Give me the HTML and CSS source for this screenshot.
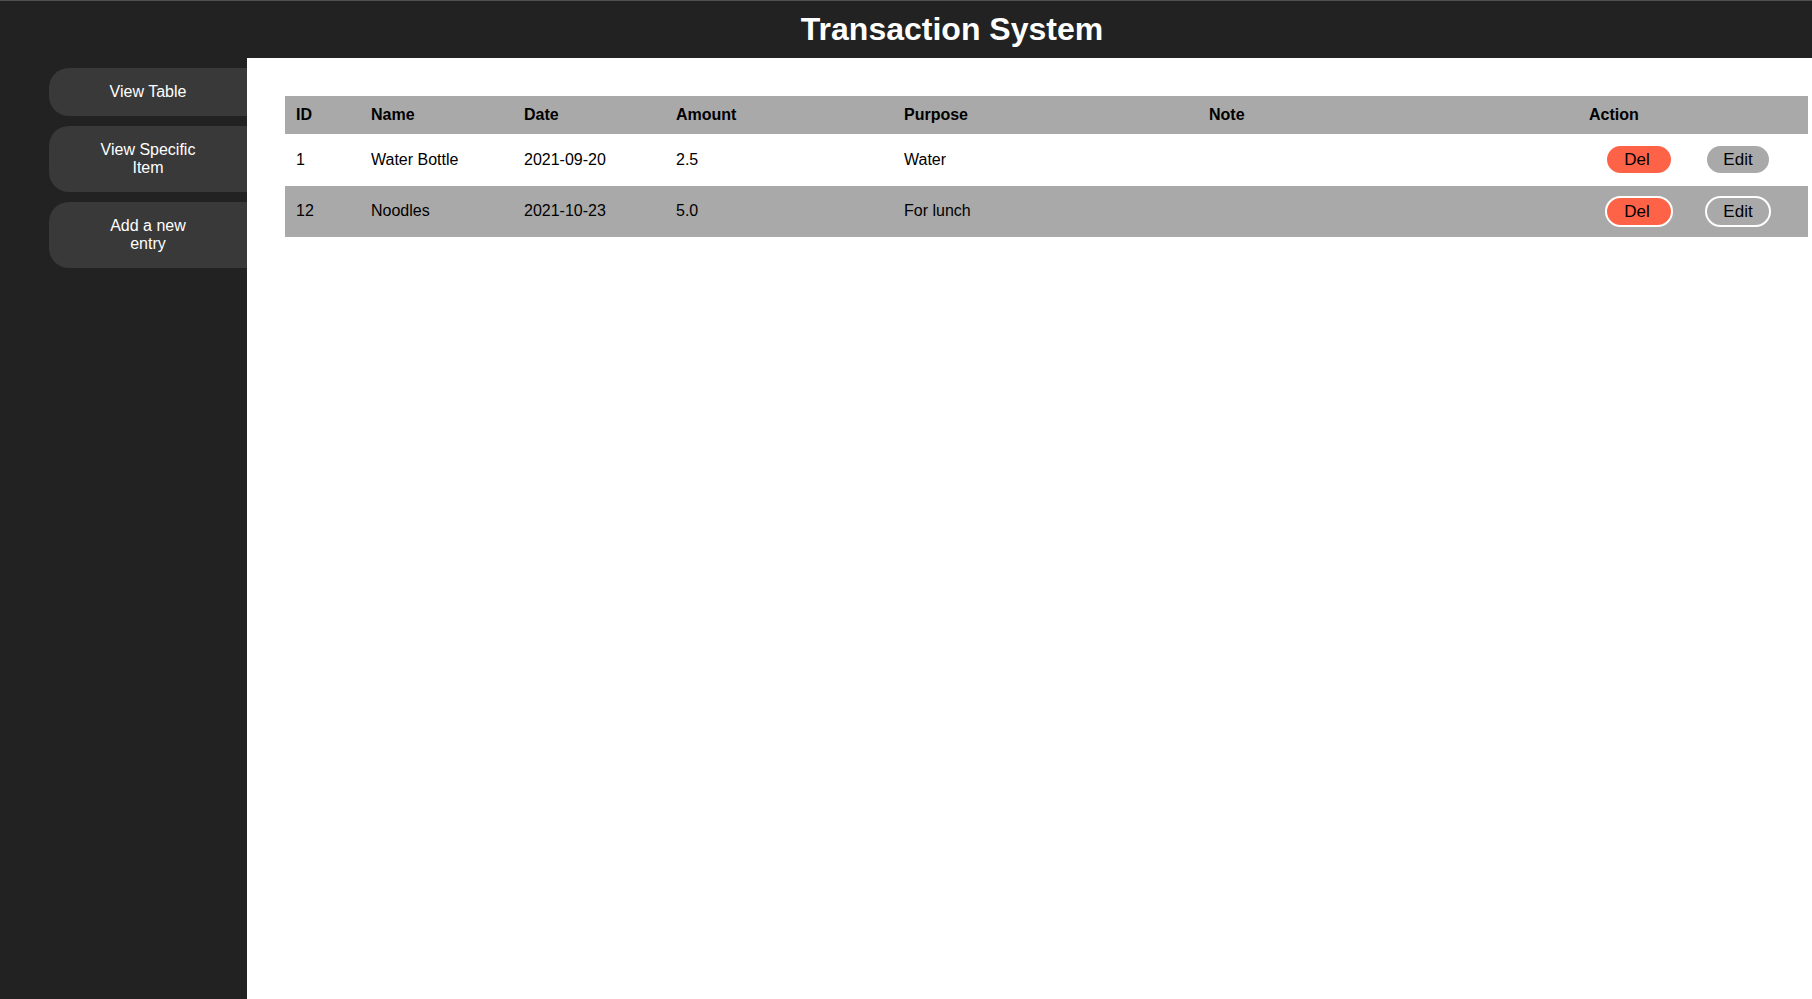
FILE: index.html
```html
<!DOCTYPE html>
<html lang="en">
<head>
<meta charset="utf-8">
<title>Transaction System</title>
<link rel="stylesheet" href="styles.css">
</head>
<body>
<header class="topbar">
  <h1 class="title">Transaction System</h1>
</header>
<div class="layout">
  <nav class="sidebar">
    <button class="nav-btn">View Table</button>
    <button class="nav-btn">View Specific Item</button>
    <button class="nav-btn">Add a new entry</button>
  </nav>
  <main class="content">
    <table class="tx-table">
      <colgroup>
        <col class="c-id">
        <col class="c-name">
        <col class="c-date">
        <col class="c-amount">
        <col class="c-purpose">
        <col class="c-note">
        <col class="c-action">
      </colgroup>
      <thead>
        <tr>
          <th>ID</th>
          <th>Name</th>
          <th>Date</th>
          <th>Amount</th>
          <th>Purpose</th>
          <th>Note</th>
          <th>Action</th>
        </tr>
      </thead>
      <tbody>
        <tr>
          <td>1</td>
          <td>Water Bottle</td>
          <td>2021-09-20</td>
          <td>2.5</td>
          <td>Water</td>
          <td></td>
          <td class="actions"><div class="action-group"><button class="pill del">Del</button><button class="pill edit">Edit</button></div></td>
        </tr>
        <tr>
          <td>12</td>
          <td>Noodles</td>
          <td>2021-10-23</td>
          <td>5.0</td>
          <td>For lunch</td>
          <td></td>
          <td class="actions"><div class="action-group"><button class="pill del">Del</button><button class="pill edit">Edit</button></div></td>
        </tr>
      </tbody>
    </table>
  </main>
</div>
</body>
</html>
```

FILE: styles.css
```css
* {
  box-sizing: border-box;
}

html, body {
  margin: 0;
  height: 100%;
}

body {
  background: #222222;
  font-family: "Liberation Sans", Arial, Helvetica, sans-serif;
  display: flex;
  flex-direction: column;
}

.topbar {
  height: 58px;
  flex: 0 0 58px;
  background: #222222;
  border-top: 1px solid #4f4f4f;
  display: flex;
  align-items: center;
  justify-content: center;
  padding-left: 92px;
}

.title {
  margin: 0;
  color: #ffffff;
  font-size: 32px;
  font-weight: bold;
  line-height: 37px;
}

.layout {
  flex: 1;
  display: flex;
  min-height: 0;
}

.sidebar {
  width: 247px;
  flex: 0 0 247px;
  background: #222222;
  padding-top: 10px;
  display: flex;
  flex-direction: column;
  gap: 10px;
}

.nav-btn {
  margin-left: 49px;
  background: #393939;
  color: #ffffff;
  border: none;
  border-radius: 20px 0 0 20px;
  padding: 15px 45px;
  font-family: inherit;
  font-size: 16px;
  line-height: 18px;
  text-align: center;
  cursor: pointer;
}

.content {
  flex: 1;
  background: #ffffff;
  padding: 38px 4px 0 38px;
}

.tx-table {
  width: 1523px;
  border-collapse: collapse;
  table-layout: fixed;
  font-size: 16px;
  color: #000000;
}

.c-id { width: 75px; }
.c-name { width: 153px; }
.c-date { width: 152px; }
.c-amount { width: 228px; }
.c-purpose { width: 305px; }
.c-note { width: 380px; }
.c-action { width: 230px; }

.tx-table th {
  background: #a9a9a9;
  text-align: left;
  font-weight: bold;
  padding: 10px 11px;
  line-height: 18px;
}

.tx-table td {
  padding: 10px 11px;
  line-height: 18px;
  vertical-align: middle;
  height: 51.5px;
}

.tx-table tbody tr:nth-child(even) td {
  background: #a9a9a9;
}

.action-group {
  display: flex;
  gap: 32px;
  padding-left: 16px;
}

.pill {
  height: 31px;
  border: 2px solid #ffffff;
  border-radius: 16px;
  font-family: inherit;
  font-size: 17px;
  color: #000000;
  line-height: 25px;
  cursor: pointer;
}

.del {
  background: #ff6347;
  width: 68px;
  padding: 0 4px 0 0;
}

.edit {
  background: #a9a9a9;
  width: 66px;
  padding: 0;
}
```
